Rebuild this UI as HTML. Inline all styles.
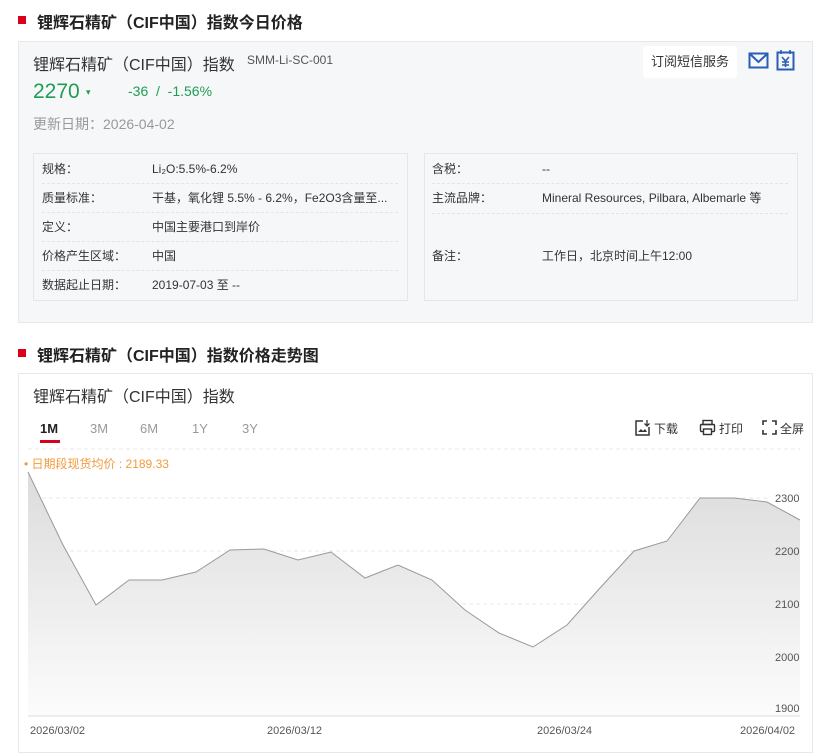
<!DOCTYPE html>
<html><head><meta charset="utf-8"><style>
*{margin:0;padding:0;box-sizing:border-box}
body{width:827px;height:748px;background:#fff;font-family:"Liberation Sans","Noto Sans CJK SC",sans-serif;position:relative;overflow:hidden;color:#333}
.abs{position:absolute}
.h{font-size:16px;font-weight:bold;color:#222}
.sq{width:8px;height:8px;background:#d9001b}
.row{position:absolute;height:29px;line-height:29px;font-size:12px;color:#333;border-bottom:1px dashed #e4e4e4}
</style></head><body>
<div class="abs sq" style="left:18px;top:16px"></div>
<div class="abs h" style="left:37px;top:9px">锂辉石精矿（CIF中国）指数今日价格</div>
<div class="abs" style="left:18px;top:41px;width:795px;height:282px;background:#f6f7f9;border:1px solid #e6e8eb"></div>
<div class="abs" style="left:33px;top:51px;font-size:16px;color:#333">锂辉石精矿（CIF中国）指数</div>
<div class="abs" style="left:247px;top:53px;font-size:12px;color:#555">SMM-Li-SC-001</div>
<div class="abs" style="left:33px;top:80px;font-size:21px;color:#1f9d55">2270</div>
<div class="abs" style="left:86px;top:87px;font-size:9px;color:#1f9d55">▾</div>
<div class="abs" style="left:128px;top:83px;font-size:14px;color:#1f9d55">-36 &nbsp;/ &nbsp;-1.56%</div>
<div class="abs" style="left:33px;top:114px;font-size:14px;color:#999">更新日期：2026-04-02</div>
<div class="abs" style="left:643px;top:46px;width:94px;height:32px;background:#fff;border-radius:3px;font-size:13px;line-height:32px;text-align:center;color:#333">订阅短信服务</div>
<svg class="abs" style="left:748px;top:51px" width="22" height="20"><rect x="1.5" y="2.5" width="18" height="14" fill="none" stroke="#2b5eb6" stroke-width="2"/><path d="M2 3l8.5 8 8.5-8" fill="none" stroke="#2b5eb6" stroke-width="2"/></svg>
<svg class="abs" style="left:776px;top:49px" width="20" height="22"><rect x="1.5" y="3.5" width="16" height="17" fill="none" stroke="#2b5eb6" stroke-width="2"/><path d="M5 1v4M14 1v4M6 8l3.5 4 3.5-4M9.5 12v6M6 13h7M6 16h7" fill="none" stroke="#2b5eb6" stroke-width="1.6"/></svg>
<div class="abs" style="left:33px;top:153px;width:375px;height:148px;background:#f6f7f9;border:1px solid #e4e6e9"></div>
<div class="abs" style="left:424px;top:153px;width:374px;height:148px;background:#f6f7f9;border:1px solid #e4e6e9"></div>
<div class="row" style="left:42px;top:155px;width:356px"><span style="position:absolute;left:0">规格：</span><span style="position:absolute;left:110px">Li₂O:5.5%-6.2%</span></div>
<div class="row" style="left:42px;top:184px;width:356px"><span style="position:absolute;left:0">质量标准：</span><span style="position:absolute;left:110px">干基，氧化锂 5.5% - 6.2%，Fe2O3含量至...</span></div>
<div class="row" style="left:42px;top:213px;width:356px"><span style="position:absolute;left:0">定义：</span><span style="position:absolute;left:110px">中国主要港口到岸价</span></div>
<div class="row" style="left:42px;top:242px;width:356px"><span style="position:absolute;left:0">价格产生区域：</span><span style="position:absolute;left:110px">中国</span></div>
<div class="row" style="left:42px;top:271px;width:356px;border:none"><span style="position:absolute;left:0">数据起止日期：</span><span style="position:absolute;left:110px">2019-07-03 至 --</span></div>
<div class="row" style="left:432px;top:155px;width:356px"><span style="position:absolute;left:0">含税：</span><span style="position:absolute;left:110px">--</span></div>
<div class="row" style="left:432px;top:184px;width:356px;border:none"><span style="position:absolute;left:0">主流品牌：</span><span style="position:absolute;left:110px">Mineral Resources, Pilbara, Albemarle 等</span></div>
<div class="row" style="left:432px;top:213px;width:356px;border:none;border-top:1px dashed #e4e4e4"></div>
<div class="row" style="left:432px;top:242px;width:356px;border:none"><span style="position:absolute;left:0">备注：</span><span style="position:absolute;left:110px">工作日，北京时间上午12:00</span></div>

<div class="abs sq" style="left:18px;top:349px"></div>
<div class="abs h" style="left:37px;top:342px">锂辉石精矿（CIF中国）指数价格走势图</div>
<div class="abs" style="left:18px;top:373px;width:795px;height:380px;border:1px solid #e6e8eb"></div>
<div class="abs" style="left:33px;top:383px;font-size:16px;color:#333">锂辉石精矿（CIF中国）指数</div>
<div class="abs" style="left:40px;top:421px;font-size:13px;font-weight:bold;color:#222">1M</div>
<div class="abs" style="left:40px;top:440px;width:20px;height:3px;background:#d9001b"></div>
<div class="abs" style="left:90px;top:421px;font-size:13px;color:#999">3M</div>
<div class="abs" style="left:140px;top:421px;font-size:13px;color:#999">6M</div>
<div class="abs" style="left:192px;top:421px;font-size:13px;color:#999">1Y</div>
<div class="abs" style="left:242px;top:421px;font-size:13px;color:#999">3Y</div>
<svg class="abs" style="left:634px;top:419px" width="16" height="17"><path d="M9 2H2v14h13V8" fill="none" stroke="#333" stroke-width="1.5"/><path d="M13 1v6M10.5 4.5L13 7l2.5-2.5" fill="none" stroke="#333" stroke-width="1.3"/><path d="M4 13l3-3 2 2 2-2 2 3z" fill="#333"/></svg>
<div class="abs" style="left:654px;top:420px;font-size:12px;color:#333">下载</div>
<svg class="abs" style="left:699px;top:419px" width="17" height="17"><rect x="4" y="1.5" width="9" height="4" fill="none" stroke="#333" stroke-width="1.4"/><rect x="1.5" y="5.5" width="14" height="7" rx="1" fill="none" stroke="#333" stroke-width="1.4"/><rect x="4.5" y="10" width="8" height="5.5" fill="#fff" stroke="#333" stroke-width="1.4"/></svg>
<div class="abs" style="left:719px;top:420px;font-size:12px;color:#333">打印</div>
<svg class="abs" style="left:762px;top:420px" width="15" height="15"><path d="M1 5V1h4M10 1h4v4M14 10v4h-4M5 14H1v-4" fill="none" stroke="#333" stroke-width="1.6"/></svg>
<div class="abs" style="left:780px;top:420px;font-size:12px;color:#333">全屏</div>
<div class="abs" style="left:24px;top:455px;font-size:12px;color:#f39a3c">• 日期段现货均价 : 2189.33</div>
<svg class="abs" style="left:0;top:440px" width="827" height="308">
<defs><linearGradient id="g" x1="0" y1="0" x2="0" y2="1"><stop offset="0" stop-color="#dcdcdc"/><stop offset="1" stop-color="#fcfcfc"/></linearGradient></defs>
<g stroke="#e8e8e8" stroke-dasharray="4 3"><line x1="28" y1="9" x2="800" y2="9"/><line x1="28" y1="58" x2="770" y2="58"/><line x1="28" y1="111" x2="770" y2="111"/><line x1="28" y1="164" x2="770" y2="164"/><line x1="28" y1="217" x2="770" y2="217"/></g>
<polygon fill="url(#g)" points="28,32 63,105 96,165 129,140 162,140 196,132 230,110 264,109 298,120 331,112 365,138 398,125 432,140 465,170 499,193 533,207 567,185 600,148 634,111 667,101 700,58 734,58 767,62 800,80 800,276 28,276"/>
<polyline fill="none" stroke="#999" stroke-width="1" points="28,32 63,105 96,165 129,140 162,140 196,132 230,110 264,109 298,120 331,112 365,138 398,125 432,140 465,170 499,193 533,207 567,185 600,148 634,111 667,101 700,58 734,58 767,62 800,80"/>
<line x1="28" y1="276" x2="800" y2="276" stroke="#ddd"/>
<g font-size="11" fill="#555" font-family="Liberation Sans,sans-serif"><text x="775" y="62">2300</text><text x="775" y="115">2200</text><text x="775" y="168">2100</text><text x="775" y="221">2000</text><text x="775" y="272">1900</text>
<text x="30" y="294">2026/03/02</text><text x="267" y="294">2026/03/12</text><text x="537" y="294">2026/03/24</text><text x="740" y="294">2026/04/02</text></g>
</svg>
</body></html>
